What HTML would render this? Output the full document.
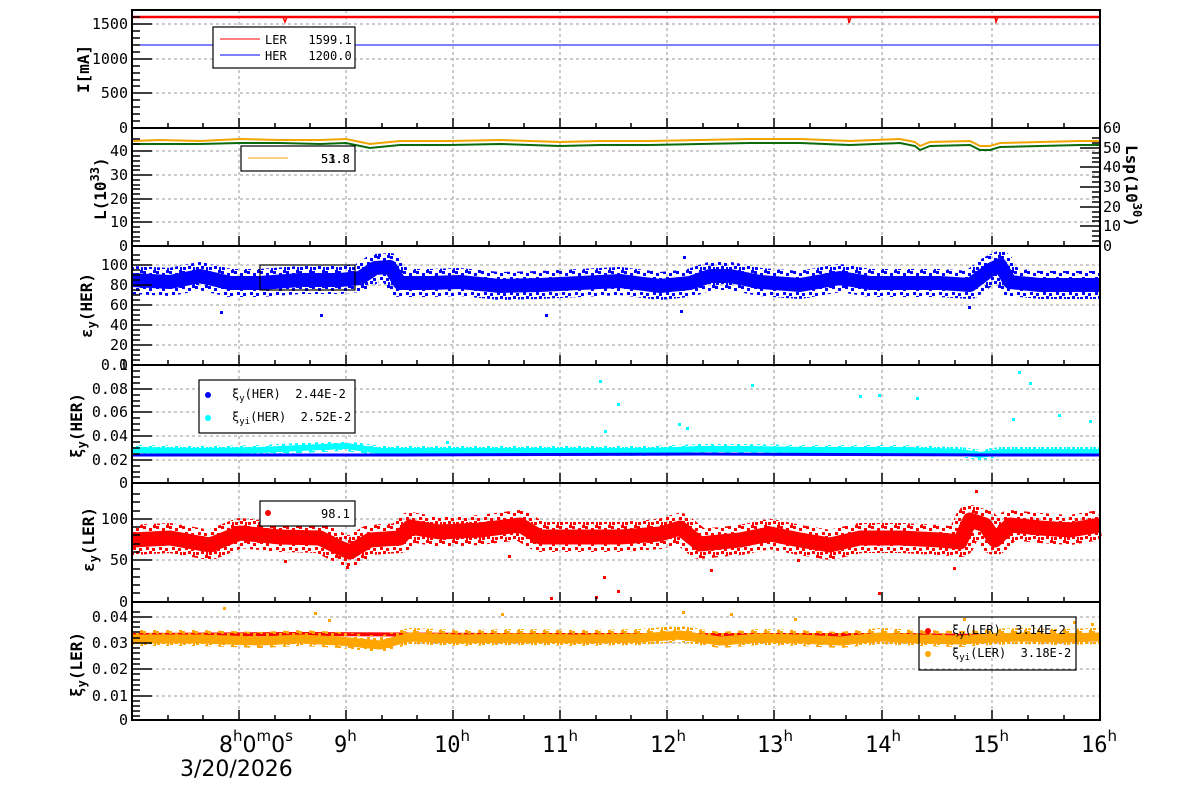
<!DOCTYPE html>
<html><head><meta charset="utf-8"><style>
html,body{margin:0;padding:0;background:#fff;}
svg{display:block;}
text{font-family:"DejaVu Sans Mono","Liberation Mono",monospace;fill:#000;}
.tl{font-size:15px;text-anchor:end;}
.ax{font-size:16px;font-weight:bold;}
.lg{font-size:12px;white-space:pre;}
.big{font-family:"DejaVu Sans","Liberation Sans",sans-serif;font-size:22px;}
.sup{font-family:"DejaVu Sans","Liberation Sans",sans-serif;font-size:15px;}
.grid line{stroke:#999;stroke-width:1;stroke-dasharray:3 3;}
</style></head><body>
<svg width="1200" height="798" viewBox="0 0 1200 798" xmlns="http://www.w3.org/2000/svg" xml:space="preserve">
<defs>
<g id="dots">
<rect x="0" y="1" width="3" height="3"/><rect x="6" y="3" width="3" height="3"/><rect x="10" y="0" width="3" height="3"/><rect x="3" y="7" width="3" height="3"/><rect x="9" y="8" width="3" height="3"/><rect x="1" y="12" width="3" height="3"/><rect x="6" y="11" width="3" height="3"/><rect x="11" y="12" width="3" height="3"/>
</g>
<pattern id="pb" width="13" height="15" patternUnits="userSpaceOnUse"><use href="#dots" fill="#00f"/></pattern>
<pattern id="pr" width="13" height="15" patternUnits="userSpaceOnUse"><use href="#dots" fill="#f00"/></pattern>
<pattern id="pc" width="13" height="15" patternUnits="userSpaceOnUse"><use href="#dots" fill="#0ff"/></pattern>
<pattern id="po" width="13" height="15" patternUnits="userSpaceOnUse"><use href="#dots" fill="#ffa500"/></pattern>
</defs>
<g class="grid">
<line x1="239" y1="10" x2="239" y2="720"/><line x1="346" y1="10" x2="346" y2="720"/>
<line x1="453" y1="10" x2="453" y2="720"/><line x1="560" y1="10" x2="560" y2="720"/>
<line x1="667" y1="10" x2="667" y2="720"/><line x1="774" y1="10" x2="774" y2="720"/>
<line x1="882" y1="10" x2="882" y2="720"/><line x1="992" y1="10" x2="992" y2="720"/>
<line x1="132" y1="24" x2="1100" y2="24"/><line x1="132" y1="59" x2="1100" y2="59"/><line x1="132" y1="93" x2="1100" y2="93"/>
<line x1="132" y1="151" x2="1100" y2="151"/><line x1="132" y1="175" x2="1100" y2="175"/><line x1="132" y1="199" x2="1100" y2="199"/><line x1="132" y1="222" x2="1100" y2="222"/>
<line x1="132" y1="265" x2="1100" y2="265"/><line x1="132" y1="285" x2="1100" y2="285"/><line x1="132" y1="305" x2="1100" y2="305"/><line x1="132" y1="325" x2="1100" y2="325"/><line x1="132" y1="345" x2="1100" y2="345"/>
<line x1="132" y1="389" x2="1100" y2="389"/><line x1="132" y1="412" x2="1100" y2="412"/><line x1="132" y1="436" x2="1100" y2="436"/><line x1="132" y1="460" x2="1100" y2="460"/>
<line x1="132" y1="519" x2="1100" y2="519"/><line x1="132" y1="560" x2="1100" y2="560"/>
<line x1="132" y1="617" x2="1100" y2="617"/><line x1="132" y1="643" x2="1100" y2="643"/><line x1="132" y1="669" x2="1100" y2="669"/><line x1="132" y1="696" x2="1100" y2="696"/>
</g>

<line x1="132" y1="17" x2="1100" y2="17" stroke="#f00" stroke-width="2.5"/>
<path d="M283 17 L285 22 L287 17 M848 17 L849 23 L851 17 M995 17 L996 22 L998 17" stroke="#f00" stroke-width="1.5" fill="none"/>
<line x1="132" y1="45" x2="1100" y2="45" stroke="#00f" stroke-width="1"/>
<polyline fill="none" stroke="#f0a500" stroke-width="2" points="132,141 160,140 200,141 240,139 280,140 320,140 346,139 370,144 400,141 450,141 500,140 560,142 600,141 650,141 700,140 750,139 800,139 850,141 900,139 915,142 920,146 930,142 970,141 980,146 990,146 1000,143 1040,142 1080,141 1100,141"/>
<polyline fill="none" stroke="#0a6b0a" stroke-width="2" points="132,144 160,144 200,144 240,143 280,143 320,144 346,143 370,148 400,145 450,145 500,144 560,146 600,145 650,145 700,144 750,143 800,143 850,145 900,143 915,146 920,150 930,146 970,145 980,150 990,150 1000,147 1040,146 1080,145 1100,145"/>
<g fill="none" stroke-linejoin="round">
<polyline stroke="url(#pb)" stroke-width="28" points="132,280 170,282 200,276 230,283 260,283 300,280 340,280 360,278 375,268 390,267 400,283 430,283 460,282 500,286 540,285 580,283 620,281 660,286 690,283 710,276 730,276 760,282 800,285 840,278 870,283 900,283 940,283 970,285 990,270 1000,265 1010,282 1040,285 1070,285 1100,285"/>
<polyline stroke="#00f" stroke-width="14" points="132,280 170,282 200,276 230,283 260,283 300,280 340,280 360,278 375,268 390,267 400,283 430,283 460,282 500,286 540,285 580,283 620,281 660,286 690,283 710,276 730,276 760,282 800,285 840,278 870,283 900,283 940,283 970,285 990,270 1000,265 1010,282 1040,285 1070,285 1100,285"/>
</g>
<g fill="#00f"><rect x="220" y="311" width="3" height="3"/><rect x="320" y="314" width="3" height="3"/><rect x="545" y="314" width="3" height="3"/><rect x="680" y="310" width="3" height="3"/><rect x="683" y="256" width="3" height="3"/><rect x="968" y="306" width="3" height="3"/><rect x="378" y="254" width="3" height="3"/></g>
<polyline fill="none" stroke="url(#pc)" stroke-width="10" points="132,450 200,451 260,450 300,448 346,446 380,451 450,451 550,451 650,451 700,449 750,449 800,450 850,450 900,450 960,452 980,455 1000,452 1050,452 1100,452"/>
<polyline fill="none" stroke="#0ff" stroke-width="6" points="132,450 200,451 260,450 300,448 346,446 380,451 450,451 550,451 650,451 700,449 750,449 800,450 850,450 900,450 960,452 980,455 1000,452 1050,452 1100,452"/>
<polyline fill="none" stroke="#00f" stroke-width="3" points="132,455 400,455 700,454 1000,455 1100,455"/>
<g fill="#0ff"><rect x="599" y="380" width="3" height="3"/><rect x="617" y="403" width="3" height="3"/><rect x="604" y="430" width="3" height="3"/><rect x="751" y="384" width="3" height="3"/><rect x="859" y="395" width="3" height="3"/><rect x="878" y="394" width="3" height="3"/><rect x="916" y="397" width="3" height="3"/><rect x="1018" y="371" width="3" height="3"/><rect x="1029" y="382" width="3" height="3"/><rect x="1058" y="414" width="3" height="3"/><rect x="1089" y="420" width="3" height="3"/><rect x="678" y="423" width="3" height="3"/><rect x="686" y="427" width="3" height="3"/><rect x="1012" y="418" width="3" height="3"/><rect x="446" y="441" width="3" height="3"/></g>
<g fill="none" stroke-linejoin="round">
<polyline stroke="url(#pr)" stroke-width="30" points="132,540 170,538 210,545 240,533 280,537 320,538 340,548 350,552 370,540 400,538 410,527 440,532 480,530 520,525 540,537 580,537 620,537 660,534 680,528 700,544 740,540 770,534 800,540 830,545 860,538 900,538 940,540 960,542 970,520 985,525 995,540 1010,525 1040,528 1070,530 1100,525"/>
<polyline stroke="#f00" stroke-width="15" points="132,540 170,538 210,545 240,533 280,537 320,538 340,548 350,552 370,540 400,538 410,527 440,532 480,530 520,525 540,537 580,537 620,537 660,534 680,528 700,544 740,540 770,534 800,540 830,545 860,538 900,538 940,540 960,542 970,520 985,525 995,540 1010,525 1040,528 1070,530 1100,525"/>
</g>
<g fill="#f00"><rect x="284" y="560" width="3" height="3"/><rect x="346" y="566" width="3" height="3"/><rect x="603" y="576" width="3" height="3"/><rect x="617" y="590" width="3" height="3"/><rect x="595" y="596" width="3" height="3"/><rect x="550" y="597" width="3" height="3"/><rect x="710" y="569" width="3" height="3"/><rect x="878" y="592" width="3" height="3"/><rect x="953" y="567" width="3" height="3"/><rect x="975" y="490" width="3" height="3"/><rect x="508" y="555" width="3" height="3"/><rect x="797" y="559" width="3" height="3"/></g>
<polyline fill="none" stroke="#f00" stroke-width="4" points="132,635 300,634 500,635 700,635 900,635 1000,636 1100,635"/>
<g fill="none" stroke-linejoin="round">
<polyline stroke="url(#po)" stroke-width="16" points="132,638 200,638 260,640 300,638 340,640 380,644 410,636 460,638 520,637 580,638 640,637 680,634 720,640 760,637 800,638 840,640 880,636 920,638 960,639 990,637 1020,636 1060,637 1100,636"/>
<polyline stroke="#ffa500" stroke-width="9" points="132,639 200,639 260,641 300,639 340,641 380,645 410,637 460,639 520,638 580,639 640,638 680,635 720,641 760,638 800,639 840,641 880,637 920,639 960,640 990,638 1020,637 1060,638 1100,637"/>
</g>
<g fill="#ffa500"><rect x="223" y="607" width="3" height="3"/><rect x="314" y="612" width="3" height="3"/><rect x="328" y="619" width="3" height="3"/><rect x="501" y="613" width="3" height="3"/><rect x="682" y="611" width="3" height="3"/><rect x="730" y="613" width="3" height="3"/><rect x="794" y="618" width="3" height="3"/><rect x="1073" y="621" width="3" height="3"/><rect x="1091" y="623" width="3" height="3"/><rect x="963" y="618" width="3" height="3"/></g>

<g fill="none" stroke="#000" stroke-width="2">
<rect x="132" y="10" width="968" height="710"/>
<line x1="132" y1="128" x2="1100" y2="128"/><line x1="132" y1="246" x2="1100" y2="246"/>
<line x1="132" y1="365" x2="1100" y2="365"/><line x1="132" y1="483" x2="1100" y2="483"/>
<line x1="132" y1="602" x2="1100" y2="602"/>
</g>
<g stroke="#000" stroke-width="1.5">
<path id="xt" d="M239 128v-10M346 128v-10M453 128v-10M560 128v-10M667 128v-10M774 128v-10M882 128v-10M992 128v-10M168 128v-5M203 128v-5M275 128v-5M310 128v-5M382 128v-5M417 128v-5M489 128v-5M524 128v-5M596 128v-5M631 128v-5M703 128v-5M738 128v-5M810 128v-5M846 128v-5M919 128v-5M955 128v-5M1028 128v-5M1064 128v-5"/>
<use href="#xt" y="118"/><use href="#xt" y="237"/><use href="#xt" y="355"/><use href="#xt" y="474"/><use href="#xt" y="592"/>
</g>
<g stroke="#000" stroke-width="1.5">
<path d="M132 24h20M132 59h20M132 93h20M132 128h20M132 17h8M132 31h8M132 38h8M132 45h8M132 52h8M132 66h8M132 73h8M132 80h8M132 86h8M132 100h8M132 107h8M132 114h8M132 121h8"/>
<path d="M132 151h20M132 175h20M132 199h20M132 222h20M132 246h20M132 139h8M132 144h8M132 156h8M132 161h8M132 166h8M132 170h8M132 180h8M132 185h8M132 189h8M132 194h8M132 203h8M132 208h8M132 213h8M132 218h8M132 227h8M132 232h8M132 237h8M132 241h8"/>
<path d="M132 265h20M132 285h20M132 305h20M132 325h20M132 345h20M132 255h8M132 260h8M132 270h8M132 275h8M132 280h8M132 290h8M132 295h8M132 300h8M132 310h8M132 315h8M132 320h8M132 330h8M132 335h8M132 340h8M132 350h8M132 355h8M132 360h8"/>
<path d="M132 389h20M132 412h20M132 436h20M132 460h20M132 371h8M132 377h8M132 383h8M132 395h8M132 401h8M132 406h8M132 418h8M132 424h8M132 430h8M132 442h8M132 448h8M132 454h8M132 466h8M132 472h8M132 477h8"/>
<path d="M132 519h20M132 560h20M132 494h8M132 502h8M132 511h8M132 527h8M132 535h8M132 544h8M132 552h8M132 569h8M132 577h8M132 585h8M132 593h8"/>
<path d="M132 617h20M132 643h20M132 669h20M132 696h20M132 612h8M132 622h8M132 627h8M132 632h8M132 638h8M132 648h8M132 653h8M132 659h8M132 664h8M132 674h8M132 680h8M132 685h8M132 690h8M132 701h8M132 706h8M132 711h8M132 716h8"/>
<path d="M1100 148h-20M1100 167h-20M1100 187h-20M1100 207h-20M1100 226h-20M1100 138h-8M1100 143h-8M1100 153h-8M1100 158h-8M1100 162h-8M1100 172h-8M1100 177h-8M1100 182h-8M1100 192h-8M1100 197h-8M1100 202h-8M1100 212h-8M1100 217h-8M1100 221h-8M1100 231h-8M1100 236h-8M1100 241h-8"/>
</g>

<g class="tl">
<text x="128" y="29">1500</text><text x="128" y="64">1000</text><text x="128" y="98">500</text><text x="128" y="133">0</text>
<text x="128" y="156">40</text><text x="128" y="180">30</text><text x="128" y="204">20</text><text x="128" y="227">10</text><text x="128" y="251">0</text>
<text x="128" y="270">100</text><text x="128" y="290">80</text><text x="128" y="310">60</text><text x="128" y="330">40</text><text x="128" y="350">20</text><text x="128" y="370">0</text><text x="128" y="370">0.1</text>
<text x="128" y="394">0.08</text><text x="128" y="417">0.06</text><text x="128" y="441">0.04</text><text x="128" y="465">0.02</text><text x="128" y="488">0</text>
<text x="128" y="524">100</text><text x="128" y="565">50</text><text x="128" y="607">0</text>
<text x="128" y="622">0.04</text><text x="128" y="648">0.03</text><text x="128" y="674">0.02</text><text x="128" y="701">0.01</text><text x="128" y="725">0</text>
</g>
<g style="font-size:15px">
<text x="1103" y="133">60</text><text x="1103" y="153">50</text><text x="1103" y="172">40</text><text x="1103" y="192">30</text><text x="1103" y="212">20</text><text x="1103" y="231">10</text><text x="1103" y="251">0</text>
</g>

<text class="ax" transform="translate(89,93) rotate(-90)">I[mA]</text>
<text class="ax" transform="translate(106,220) rotate(-90)">L(10<tspan dy="-7" font-size="12">33</tspan><tspan dy="7">)</tspan></text>
<text class="ax" transform="translate(92,338) rotate(-90)">ε<tspan dy="4" font-size="12">y</tspan><tspan dy="-4">(HER)</tspan></text>
<text class="ax" transform="translate(82,458) rotate(-90)">ξ<tspan dy="4" font-size="12">y</tspan><tspan dy="-4">(HER)</tspan></text>
<text class="ax" transform="translate(94,572) rotate(-90)">ε<tspan dy="4" font-size="12">y</tspan><tspan dy="-4">(LER)</tspan></text>
<text class="ax" transform="translate(82,697) rotate(-90)">ξ<tspan dy="4" font-size="12">y</tspan><tspan dy="-4">(LER)</tspan></text>
<text class="ax" transform="translate(1126,145) rotate(90)">Lsp(10<tspan dy="-7" font-size="12">30</tspan><tspan dy="7">)</tspan></text>

<g fill="#fff" stroke="#000" stroke-width="1.2">
<rect x="213" y="27" width="142" height="41"/><rect x="241" y="146" width="114" height="25"/>
<rect x="199" y="380" width="156" height="53"/>
<rect x="260" y="501" width="95" height="25"/>
</g>
<rect x="260" y="265" width="95" height="25" fill="none" stroke="#000" stroke-width="1.2"/>
<rect x="919" y="617" width="157" height="53" fill="none" stroke="#000" stroke-width="1.2"/>
<line x1="220" y1="39" x2="260" y2="39" stroke="#f00"/><line x1="220" y1="55" x2="260" y2="55" stroke="#00f"/>
<text class="lg" x="265" y="44">LER   1599.1</text><text class="lg" x="265" y="60">HER   1200.0</text>
<line x1="248" y1="158" x2="288" y2="158" stroke="#f0a500"/>
<text class="lg" x="321" y="163">53.8</text><text class="lg" x="321" y="163">51.8</text>
<circle cx="208" cy="395" r="3" fill="#00f"/><circle cx="208" cy="418" r="3" fill="#0ff"/>
<text class="lg" x="232" y="398">ξ<tspan dy="3" font-size="9">y</tspan><tspan dy="-3">(HER)  2.44E-2</tspan></text>
<text class="lg" x="232" y="421">ξ<tspan dy="3" font-size="9">yi</tspan><tspan dy="-3">(HER)  2.52E-2</tspan></text>
<circle cx="268" cy="513" r="3" fill="#f00"/><text class="lg" x="321" y="518">98.1</text>
<circle cx="928" cy="631" r="3" fill="#f00"/><circle cx="928" cy="654" r="3" fill="#ffa500"/>
<text class="lg" x="952" y="634">ξ<tspan dy="3" font-size="9">y</tspan><tspan dy="-3">(LER)  3.14E-2</tspan></text>
<text class="lg" x="952" y="657">ξ<tspan dy="3" font-size="9">yi</tspan><tspan dy="-3">(LER)  3.18E-2</tspan></text>

<text class="big" x="219" y="752">8<tspan class="sup" dy="-11">h</tspan><tspan dy="11">0</tspan><tspan class="sup" dy="-11">m</tspan><tspan dy="11">0</tspan><tspan class="sup" dy="-11">s</tspan></text>
<text class="big" x="180" y="776">3/20/2026</text>
<g class="big">
<text x="334" y="752">9<tspan class="sup" dy="-11">h</tspan></text>
<text x="434" y="752">10<tspan class="sup" dy="-11">h</tspan></text>
<text x="542" y="752">11<tspan class="sup" dy="-11">h</tspan></text>
<text x="650" y="752">12<tspan class="sup" dy="-11">h</tspan></text>
<text x="757" y="752">13<tspan class="sup" dy="-11">h</tspan></text>
<text x="865" y="752">14<tspan class="sup" dy="-11">h</tspan></text>
<text x="973" y="752">15<tspan class="sup" dy="-11">h</tspan></text>
<text x="1081" y="752">16<tspan class="sup" dy="-11">h</tspan></text>
</g>
</svg>
</body></html>
